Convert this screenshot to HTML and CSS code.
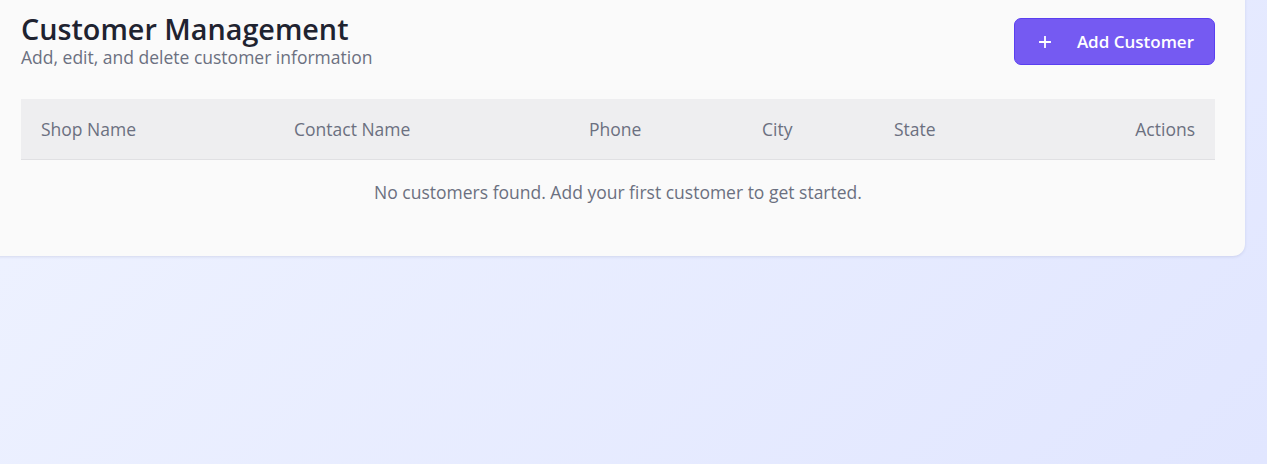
FILE: index.html
```html
<!DOCTYPE html>
<html lang="en">
<head>
<meta charset="utf-8">
<title>Customer Management</title>
<link rel="stylesheet" href="styles.css">
</head>
<body>
<main class="page">
  <section class="card">
    <header class="card-header">
      <div class="heading">
        <h1 class="title">Customer Management</h1>
        <p class="subtitle">Add, edit, and delete customer information</p>
      </div>
      <button class="btn-add" type="button">
        <svg class="btn-icon" width="12" height="12" viewBox="0 0 12 12" aria-hidden="true">
          <path d="M6 0.5V11.5M0.5 6H11.5" stroke="#fff" stroke-width="1.8" stroke-linecap="round" fill="none"/>
        </svg>
        <span>Add Customer</span>
      </button>
    </header>
    <table class="table">
      <colgroup>
        <col class="c-shop">
        <col class="c-contact">
        <col class="c-phone">
        <col class="c-city">
        <col class="c-state">
        <col class="c-actions">
      </colgroup>
      <thead>
        <tr>
          <th>Shop Name</th>
          <th>Contact Name</th>
          <th>Phone</th>
          <th>City</th>
          <th>State</th>
          <th class="right">Actions</th>
        </tr>
      </thead>
      <tbody>
        <tr>
          <td class="empty" colspan="6">No customers found. Add your first customer to get started.</td>
        </tr>
      </tbody>
    </table>
  </section>
</main>
</body>
</html>
```
FILE: styles.css
```css
html, body {
  margin: 0;
  padding: 0;
  height: 100%;
}
body {
  font-family: "Open Sans", "Noto Sans", sans-serif;
  background: linear-gradient(135deg, #eff3ff 0%, #e1e6ff 100%);
  overflow: hidden;
}
.page {
  width: 1245px;
}
.card {
  margin-left: -12px;
  margin-top: -12px;
  background: #fafafa;
  border-radius: 12px;
  box-shadow: 0 1px 3px rgba(100, 110, 160, 0.18);
  padding: 24px 30px 24px 33px;
}
.card-header {
  display: flex;
  justify-content: space-between;
  align-items: flex-start;
}
.title {
  margin: 0;
  font-size: 28.75px;
  font-weight: 600;
  line-height: 34px;
  color: #1f2330;
}
.subtitle {
  margin: 0;
  font-size: 17.5px;
  line-height: 22px;
  color: #6b7080;
}
.btn-add {
  margin-top: 6px;
  display: flex;
  align-items: center;
  gap: 26px;
  height: 47px;
  padding: 0 20px 0 24px;
  background: #755af2;
  border: 1px solid #5a3ff0;
  border-radius: 7px;
  color: #fff;
  font-family: inherit;
  font-size: 17px;
  font-weight: 600;
}
.btn-icon {
  display: block;
}
.table {
  margin-top: 31px;
  width: 1194px;
  border-collapse: collapse;
  table-layout: fixed;
}
.c-shop { width: 253px; }
.c-contact { width: 295px; }
.c-phone { width: 173px; }
.c-city { width: 132px; }
.c-state { width: 200px; }
.c-actions { width: 141px; }
.table th {
  background: #eeeef0;
  height: 60px;
  padding: 0 20px;
  text-align: left;
  font-size: 17.5px;
  font-weight: 500;
  color: #6b7080;
  border-bottom: 1px solid #e0e0e3;
}
.table th.right {
  text-align: right;
}
.empty {
  text-align: center;
  padding: 20px 0 28px;
  font-size: 17.5px;
  line-height: 24px;
  color: #6b7080;
}
```
